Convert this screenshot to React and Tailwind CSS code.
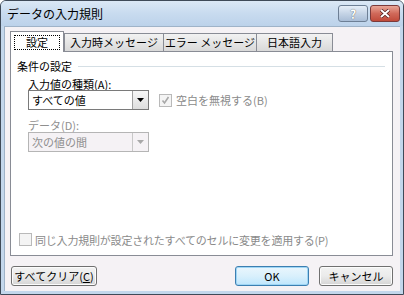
import React from 'react';

const font = { fontFamily: '"MS UI Gothic", "Noto Sans CJK JP", sans-serif' };

const Checkbox = ({ checked }) => (
  <div className="w-[13px] h-[13px] border border-[#b9b9b9] bg-[#f4f4f4] flex items-center justify-center shrink-0">
    {checked && (
      <svg width="9" height="9" viewBox="0 0 9 9">
        <path d="M1.5 4.5 L3.5 7 L7.5 1" stroke="#a8a8a8" strokeWidth="1.6" fill="none" />
      </svg>
    )}
  </div>
);

const Combo = ({ value, disabled }) => (
  <div
    className={`w-[121px] h-[20px] border flex items-center ${
      disabled ? 'border-[#b5b5b5] bg-[#f5f2f5] text-[#8f8f8f]' : 'border-[#7a7a7a] bg-white text-black'
    }`}
  >
    <span className="flex-1 pl-[3px] leading-[18px]">{value}</span>
    <div
      className={`w-[16px] h-[18px] flex items-center justify-center border-l ${
        disabled ? 'border-[#c8c8c8] bg-[#f5f2f5]' : 'border-[#a0a0a0] bg-gradient-to-b from-[#f7f7f7] to-[#dedede]'
      }`}
    >
      <svg width="7" height="4" viewBox="0 0 7 4">
        <path d="M0 0 L7 0 L3.5 4 Z" fill={disabled ? '#a8a8a8' : '#000'} />
      </svg>
    </div>
  </div>
);

const Button = ({ children, primary, width }) => (
  <div
    className={`h-[20px] rounded-[3px] border flex items-center justify-center ${width} ${
      primary
        ? 'border-[#3c7fb1] bg-gradient-to-b from-[#eaf6fd] via-[#d9f0fc] to-[#bee6fd] shadow-[inset_0_0_0_1px_#9fd6f5]'
        : 'border-[#707070] bg-gradient-to-b from-[#f2f2f2] via-[#ebebeb] to-[#d4d4d4] shadow-[inset_0_0_0_1px_#fcfcfc]'
    }`}
  >
    {children}
  </div>
);

const Tab = ({ label, width }) => (
  <div
    className={`${width} h-[18px] mt-[2px] border border-b-0 border-[#898c95] bg-gradient-to-b from-[#f2f2f2] to-[#d9d9d9] flex items-center justify-center -ml-px first:ml-0`}
  >
    {label}
  </div>
);

export default function App() {
  return (
    <div
      className="w-[404px] h-[295px] border border-[#3f4a58] rounded-t-[6px] bg-[#c3d7ec] flex flex-col text-[12px] overflow-hidden"
      style={font}
    >
      {/* Title bar */}
      <div className="h-[25px] flex items-center pl-[6px] pr-[3px] bg-gradient-to-b from-[#dbe8f5] via-[#c8dbef] to-[#bcd2ea]">
        <span className="flex-1 text-[12px] text-black">データの入力規則</span>
        <div className="w-[30px] h-[17px] rounded-[3px] border border-[#6d7f95] bg-gradient-to-b from-[#e6eef8] via-[#c5d4e6] to-[#a9bdd6] flex items-center justify-center text-[12px] font-bold text-white [text-shadow:0_0_1px_#333]">
          ?
        </div>
        <div className="w-[30px] h-[17px] ml-[2px] rounded-[3px] border border-[#7b3a3a] bg-gradient-to-b from-[#e8a697] via-[#d0695a] to-[#c04a3a] flex items-center justify-center">
          <svg width="12" height="9" viewBox="0 0 12 9">
            <path d="M2 1 L10 8 M10 1 L2 8" stroke="#4a1a1a" strokeWidth="3.4" />
            <path d="M2 1 L10 8 M10 1 L2 8" stroke="#fff" strokeWidth="2" />
          </svg>
        </div>
      </div>

      {/* Body */}
      <div className="flex-1 mx-[3px] mb-[3px] bg-[#f5f2f5] border-l border-t border-[#9fb3c8] flex flex-col pl-[5px] pr-[7px] pt-[4px] text-[11px]">
        {/* Tabs */}
        <div className="flex h-[20px] items-end relative z-10">
          <div className="w-[54px] h-[21px] -mb-px border border-b-0 border-[#898c95] bg-white flex items-center justify-center">
            <div className="w-[46px] h-[15px] border border-dotted border-black flex items-center justify-center">
              設定
            </div>
          </div>
          <div className="flex self-start">
            <Tab label="入力時メッセージ" width="w-[100px]" />
            <Tab label="エラー メッセージ" width="w-[94px]" />
            <Tab label="日本語入力" width="w-[77px]" />
          </div>
        </div>

        {/* Panel */}
        <div className="h-[205px] border border-[#898c95] bg-white flex flex-col px-[6px] pt-[8px] pb-[7px]">
          <div className="flex items-center">
            <span className="leading-[13px]">条件の設定</span>
            <div className="flex-1 h-px bg-[#d5dfe5] ml-[6px] mr-px" />
          </div>
          <div className="pl-[11px] pt-[5px]">
            <div className="leading-[12px]">
              入力値の種類(<span className="underline">A</span>):
            </div>
            <div className="flex items-center">
              <Combo value="すべての値" />
              <div className="flex items-center ml-[10px] text-[#8a8a8a]">
                <Checkbox checked />
                <span className="ml-[4px]">空白を無視する(B)</span>
              </div>
            </div>
            <div className="leading-[12px] mt-[9px] mb-[1px] text-[#8f8f8f]">データ(D):</div>
            <Combo value="次の値の間" disabled />
          </div>
          <div className="mt-auto flex items-center pl-[2px] text-[#8a8a8a]">
            <Checkbox />
            <span className="ml-[3px] tracking-[-0.2px]">同じ入力規則が設定されたすべてのセルに変更を適用する(P)</span>
          </div>
        </div>

        {/* Buttons */}
        <div className="flex items-center mt-[10px] pl-px">
          <Button width="w-[86px]">
            すべてクリア(<span className="underline">C</span>)
          </Button>
          <div className="flex-1" />
          <Button primary width="w-[74px]">
            OK
          </Button>
          <div className="w-[10px]" />
          <Button width="w-[74px]">キャンセル</Button>
        </div>
      </div>
    </div>
  );
}
